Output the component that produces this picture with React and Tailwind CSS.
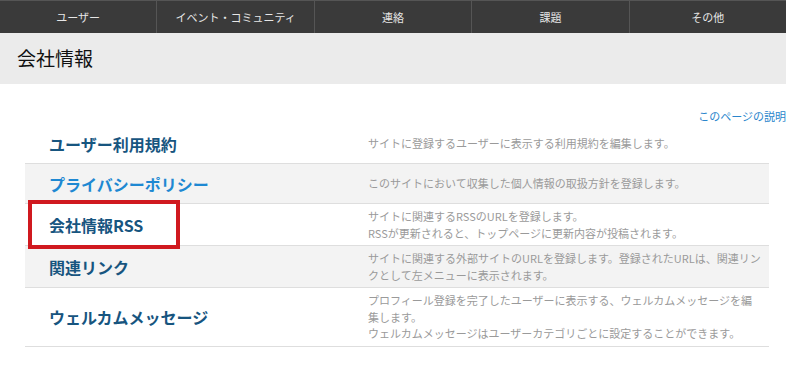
const navItems = ["ユーザー", "イベント・コミュニティ", "連絡", "課題", "その他"];

const rows = [
  {
    title: "ユーザー利用規約",
    desc: ["サイトに登録するユーザーに表示する利用規約を編集します。"],
  },
  {
    title: "プライバシーポリシー",
    desc: ["このサイトにおいて収集した個人情報の取扱方針を登録します。"],
    hover: true,
  },
  {
    title: "会社情報RSS",
    desc: [
      "サイトに関連するRSSのURLを登録します。",
      "RSSが更新されると、トップページに更新内容が投稿されます。",
    ],
    marked: true,
  },
  {
    title: "関連リンク",
    desc: [
      "サイトに関連する外部サイトのURLを登録します。登録されたURLは、関連リンクとして左メニューに表示されます。",
    ],
    shaded: true,
  },
  {
    title: "ウェルカムメッセージ",
    desc: [
      "プロフィール登録を完了したユーザーに表示する、ウェルカムメッセージを編集します。",
      "ウェルカムメッセージはユーザーカテゴリごとに設定することができます。",
    ],
  },
];

function App() {
  return (
    <div
      className="w-[786px] min-h-[369px] bg-white"
      style={{ fontFamily: '"Noto Sans CJK JP", "Noto Sans", sans-serif' }}
    >
      {/* ── Top nav ── */}
      <nav className="flex h-[33px] bg-[#3a3a3a] border-t border-[#555]">
        {navItems.map((item, i) => (
          <div
            key={item}
            className={`flex-1 flex items-center justify-center text-[11px] text-[#e6e6e6] ${
              i > 0 ? "border-l border-[#555]" : ""
            }`}
          >
            {item}
          </div>
        ))}
      </nav>

      {/* ── Page header ── */}
      <div className="h-[51px] bg-[#ebebeb] flex items-center pl-[17px]">
        <h1 className="text-[19px] text-[#111]">会社情報</h1>
      </div>

      {/* ── Help link ── */}
      <div className="flex justify-end pt-[24px] h-[40px]">
        <a className="text-[11px] leading-[16px] text-[#2a86cc]">このページの説明</a>
      </div>

      {/* ── Settings list ── */}
      <div className="ml-[25px] w-[744px]">
        {rows.map((row) => (
          <div
            key={row.title}
            className={`relative flex items-center min-h-[40px] py-[4px] border-b border-[#dedede] ${
              row.hover || row.shaded ? "bg-[#f3f3f3]" : ""
            }`}
          >
            <div
              className={`w-[343px] shrink-0 pl-[24px] text-[16px] leading-[24px] font-bold ${
                row.hover ? "text-[#1e88d2]" : "text-[#17557f]"
              }`}
            >
              {row.title}
            </div>
            <div className="w-[394px] text-[11px] leading-[16.5px] text-[#9a9a9a]">
              {row.desc.map((line) => (
                <p key={line}>{line}</p>
              ))}
            </div>
            {row.marked && (
              <div className="absolute z-10 left-[3px] top-[-4px] w-[152px] h-[49px] border-[4px] border-[#d0191f]" />
            )}
          </div>
        ))}
      </div>
    </div>
  );
}

export default App;
